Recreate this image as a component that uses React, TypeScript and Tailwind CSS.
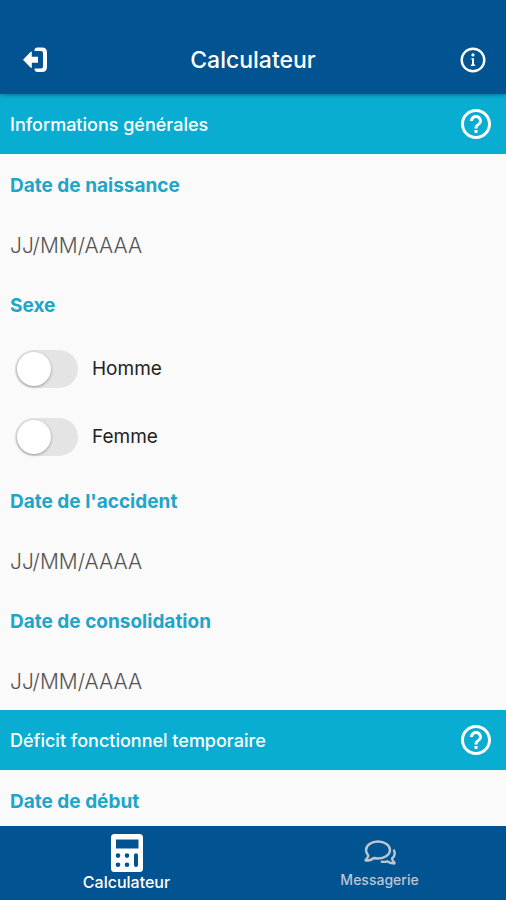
import { useState } from 'react';
import { MdHelpOutline } from 'react-icons/md';

const DATE_PLACEHOLDER = 'JJ/MM/AAAA';

function LogoutIcon() {
  return (
    <svg viewBox="0 0 24 26" className="h-[26px] w-6" aria-hidden="true">
      <path d="M11.500 4V3.500q0-3 3-3H19q5 0 5 5V20q0 5-5 5h-4.500q-3 0-3-3v-.5h4H18q2 0 2-2V6q0-2-2-2Z" fill="currentColor" />
      <path d="M0 12.800 7.500 5q1.300-1 1.300.6v4.200H15v6H8.800V20q0 1.600-1.300.6Z" fill="currentColor" />
    </svg>
  );
}

function InfoIcon() {
  return (
    <svg viewBox="0 0 26 26" className="size-[26px]" fill="none" aria-hidden="true">
      <circle cx="13" cy="13" r="11.3" stroke="currentColor" strokeWidth="2.4" />
      <circle cx="13" cy="7.900" r="1.600" fill="currentColor" />
      <path d="M11.300 11.200H14v6.200h1.100v1.500h-4.200v-1.500H12v-4.800h-.7Z" fill="currentColor" />
    </svg>
  );
}

function CalculatorIcon() {
  return (
    <svg viewBox="0 0 32 38" className="h-[38px] w-8" aria-hidden="true">
      <path
        fill="currentColor"
        fillRule="evenodd"
        d="M3.500 0h25Q32 0 32 3.500v31Q32 38 28.500 38h-25Q0 38 0 34.500v-31Q0 0 3.500 0ZM5 5.500v9h22.500v-9ZM7 19.300a2.300 2.300 0 1 0 0 4.600 2.300 2.300 0 0 0 0-4.600ZM16 19.300a2.300 2.300 0 1 0 0 4.600 2.300 2.300 0 0 0 0-4.600ZM7 28.400a2.300 2.300 0 1 0 0 4.600 2.300 2.300 0 0 0 0-4.600ZM16 28.400a2.300 2.300 0 1 0 0 4.600 2.300 2.300 0 0 0 0-4.600ZM25 19.300q-2 0-2 2V31q0 2 2 2t2-2v-9.700q0-2-2-2Z"
      />
    </svg>
  );
}

function MessagesIcon() {
  return (
    <svg viewBox="0 0 32 26" className="h-[26px] w-8" fill="none" stroke="currentColor" strokeWidth="2.400" strokeLinejoin="round" strokeLinecap="round" aria-hidden="true">
      <path d="M14 1.500c6.600 0 12 3.800 12 8.500s-5.400 8.500-12 8.500c-1.500 0-2.900-.2-4.200-.5-1.900 1.700-4.600 2.600-7.800 2.600-.5 0-.6-.7-.2-1 1.500-1.200 2.300-2.400 2.500-4C3 14.100 2 12.200 2 10c0-4.700 5.400-8.500 12-8.500Z" />
      <path d="M30 10.500c1.400 3.100.6 5.900-2 8 .2 1.600.9 2.800 2.300 4 .4.400.2 1-.3 1-2.800 0-5-.8-6.800-2.200-2 .6-3.700.7-5.400.4" />
    </svg>
  );
}

function SectionHeader({ title }: { title: string }) {
  return (
    <div className="flex h-[60px] items-center justify-between bg-[#09add1] pl-[10px] pr-3 text-white">
      <h2 className="pt-[2px] text-lg font-medium">{title}</h2>
      <button type="button" aria-label={`Aide : ${title}`}>
        <MdHelpOutline className="size-9" aria-hidden="true" />
      </button>
    </div>
  );
}

function DateField({ id, label }: { id: string; label: string }) {
  return (
    <div>
      <label htmlFor={id} className="flex h-[60px] items-center px-[10px] pt-1 text-[19px] font-bold text-[#20a5c8]">
        {label}
      </label>
      <input
        id={id}
        type="text"
        inputMode="numeric"
        placeholder={DATE_PLACEHOLDER}
        className="block h-[60px] w-full bg-transparent px-[10px] pt-[2px] text-[21px] font-light text-[#333333] outline-none placeholder:text-[#555555]"
      />
    </div>
  );
}

function SwitchRow({ label, checked, onChange }: { label: string; checked: boolean; onChange: () => void }) {
  return (
    <label className="flex h-[68px] items-center gap-[14px] px-[15px] pt-[2px] text-[19px] text-[#222222]">
      <input
        type="checkbox"
        role="switch"
        checked={checked}
        onChange={onChange}
        className="h-[38px] w-[63px] shrink-0 appearance-none rounded-full bg-[#e4e4e4] p-[2px] before:block before:size-[34px] before:rounded-full before:bg-white before:shadow-[0_1px_3px_rgba(0,0,0,0.35)] before:transition checked:bg-[#09add1] checked:before:translate-x-[25px]"
      />
      {label}
    </label>
  );
}

export default function App() {
  const [sexe, setSexe] = useState<'homme' | 'femme' | null>(null);

  return (
    <div className="flex h-screen flex-col bg-[#fafafa] font-['Inter',sans-serif]">
      <header className="z-10 grid h-[94px] shrink-0 grid-cols-[1fr_auto_1fr] items-end bg-[#025391] px-5 pb-4 text-white shadow-[0_1px_4px_rgba(0,0,0,0.35)]">
        <button type="button" aria-label="Se déconnecter" className="flex h-9 items-center justify-self-start pl-[3px]">
          <LogoutIcon />
        </button>
        <h1 className="text-[23px]/9 font-medium">Calculateur</h1>
        <button type="button" aria-label="Informations" className="flex h-9 items-center justify-self-end">
          <InfoIcon />
        </button>
      </header>

      <main className="min-h-0 flex-1 overflow-y-auto [scrollbar-width:none]">
        <section>
          <SectionHeader title="Informations générales" />
          <DateField id="naissance" label="Date de naissance" />
          <fieldset>
            <legend className="flex h-[60px] items-center px-[10px] pt-1 text-[19px] font-bold text-[#20a5c8]">Sexe</legend>
            <SwitchRow label="Homme" checked={sexe === 'homme'} onChange={() => setSexe(sexe === 'homme' ? null : 'homme')} />
            <SwitchRow label="Femme" checked={sexe === 'femme'} onChange={() => setSexe(sexe === 'femme' ? null : 'femme')} />
          </fieldset>
          <DateField id="accident" label="Date de l'accident" />
          <DateField id="consolidation" label="Date de consolidation" />
        </section>
        <section>
          <SectionHeader title="Déficit fonctionnel temporaire" />
          <DateField id="debut" label="Date de début" />
        </section>
      </main>

      <nav className="grid h-[74px] shrink-0 grid-cols-2 bg-[#025391]">
        <a href="#calculateur" aria-current="page" className="flex flex-col items-center justify-end pb-2 text-base/5 font-medium text-white">
          <CalculatorIcon />
          Calculateur
        </a>
        <a href="#messagerie" className="flex flex-col items-center justify-end gap-1 pb-[10px] text-sm/5 font-medium text-[#bcc5d2]">
          <MessagesIcon />
          Messagerie
        </a>
      </nav>
    </div>
  );
}
